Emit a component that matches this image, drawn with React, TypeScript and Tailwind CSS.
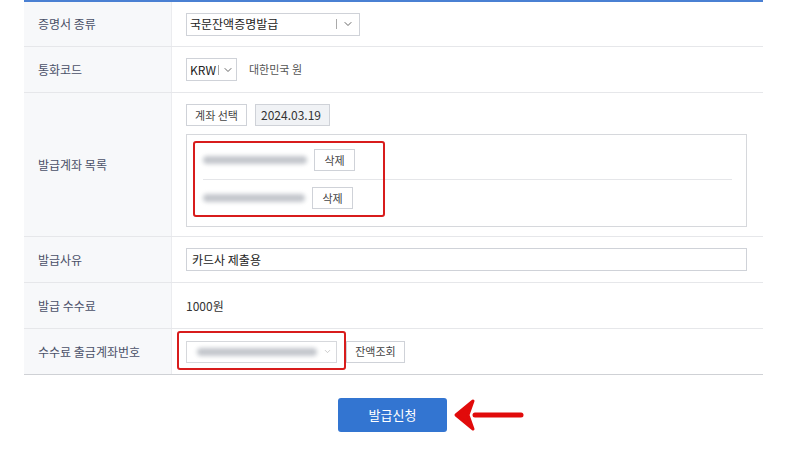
import { ChevronDown } from 'lucide-react'

const font = { fontFamily: '"Noto Sans CJK KR", "Noto Sans", sans-serif' }

function Row({ label, h, children }: { label: string; h: string; children: React.ReactNode }) {
  return (
    <div className={`flex border-b border-[#e6e7ea] ${h}`}>
      <div className="w-[148px] shrink-0 bg-[#f7f8fa] border-r border-[#ebecef] flex items-center pl-[14px] text-[12px] text-[#4a5068]">
        {label}
      </div>
      <div className="flex-1 flex items-center pl-[14px] text-[12px] text-[#333]">{children}</div>
    </div>
  )
}

function Blur({ w }: { w: string }) {
  return <div className={`h-[8px] ${w} rounded-full bg-[#c3c6cc] blur-[2px]`} />
}

function SmallBtn({ children, cls = '' }: { children: React.ReactNode; cls?: string }) {
  return (
    <div className={`h-[22px] flex items-center justify-center border border-[#cfd2d8] bg-white text-[11px] text-[#444] ${cls}`}>
      {children}
    </div>
  )
}

export default function App() {
  return (
    <div className="w-[800px] h-[450px] bg-white overflow-hidden" style={font}>
      <div className="ml-[24px] w-[739px] border-t-2 border-[#4a80d3]">
        <Row label="증명서 종류" h="h-[45px]">
          <div className="w-[174px] h-[23px] border border-[#cfd2d8] flex items-center pl-[3px] text-[12px] text-[#222]">
            <span className="flex-1">국문잔액증명발급</span>
            <span className="w-px h-[10px] bg-[#aaa]" />
            <ChevronDown className="w-[12px] h-[12px] mx-[5px] text-[#666]" strokeWidth={2} />
          </div>
        </Row>
        <Row label="통화코드" h="h-[46px]">
          <div className="w-[51px] h-[23px] border border-[#cfd2d8] flex items-center pl-[3px] text-[12px] text-[#222]">
            <span>KRW</span>
            <span className="w-px h-[10px] bg-[#aaa] ml-[2px]" />
            <ChevronDown className="w-[12px] h-[12px] ml-[3px] text-[#666]" strokeWidth={2} />
          </div>
          <span className="ml-[12px] text-[11px] text-[#555]">대한민국 원</span>
        </Row>
        <Row label="발급계좌 목록" h="h-[144px]">
          <div className="flex flex-col self-start pt-[11px] w-[561px]">
            <div className="flex gap-[8px]">
              <SmallBtn cls="w-[61px]">계좌 선택</SmallBtn>
              <div className="w-[75px] h-[22px] border border-[#cfd2d8] bg-[#f0f2f5] flex items-center pl-[5px] text-[12px] text-[#333]">
                2024.03.19
              </div>
            </div>
            <div className="mt-[8px] h-[93px] border border-[#d6d8dc] relative">
              <div className="px-[16px] pt-[14px]">
                <div className="flex items-center h-[22px] gap-[7px]">
                  <Blur w="w-[104px]" />
                  <SmallBtn cls="w-[41px]">삭제</SmallBtn>
                </div>
                <div className="mt-[8px] border-t border-[#e5e6e9] mr-[-2px]" />
                <div className="mt-[7px] flex items-center h-[22px] gap-[7px]">
                  <Blur w="w-[102px]" />
                  <SmallBtn cls="w-[41px]">삭제</SmallBtn>
                </div>
              </div>
              <div className="absolute left-[6px] top-[6px] w-[192px] h-[76px] border-2 border-[#d81c1c] rounded-[3px]" />
            </div>
          </div>
        </Row>
        <Row label="발급사유" h="h-[46px]">
          <div className="w-[561px] h-[23px] border border-[#cfd2d8] flex items-center pl-[5px] text-[12px] text-[#222]">
            카드사 제출용
          </div>
        </Row>
        <Row label="발급 수수료" h="h-[46px]">
          <span className="text-[12px] text-[#333]">1000원</span>
        </Row>
        <div className="flex h-[46px] border-b border-[#cfd1d5]">
          <div className="w-[148px] shrink-0 bg-[#f7f8fa] border-r border-[#ebecef] flex items-center pl-[14px] text-[12px] text-[#4a5068]">
            수수료 출금계좌번호
          </div>
          <div className="flex-1 flex items-center pl-[14px] relative">
            <div className="w-[151px] h-[22px] border border-[#d6d8dc] flex items-center pl-[10px] gap-[6px]">
              <Blur w="w-[120px]" />
              <ChevronDown className="w-[9px] h-[9px] text-[#bbb]" />
            </div>
            <SmallBtn cls="w-[59px] ml-[9px]">잔액조회</SmallBtn>
            <div className="absolute left-[5px] top-[2px] w-[169px] h-[39px] border-2 border-[#d81c1c] rounded-[3px]" />
          </div>
        </div>
      </div>
      <div className="flex items-center mt-[23px] ml-[338px]">
        <div className="w-[109px] h-[34px] rounded-[3px] bg-[#3375d1] flex items-center justify-center text-white text-[13px]">
          발급신청
        </div>
        <svg width="72" height="34" viewBox="0 0 72 34" className="ml-[6px]">
          <path d="M22 17 H68" stroke="#e10b0b" strokeWidth="5" strokeLinecap="round" />
          <path d="M3 17 L20 3 L15 17 L20 31 Z" fill="#e10b0b" stroke="#e10b0b" strokeWidth="3" strokeLinejoin="round" />
        </svg>
      </div>
    </div>
  )
}
